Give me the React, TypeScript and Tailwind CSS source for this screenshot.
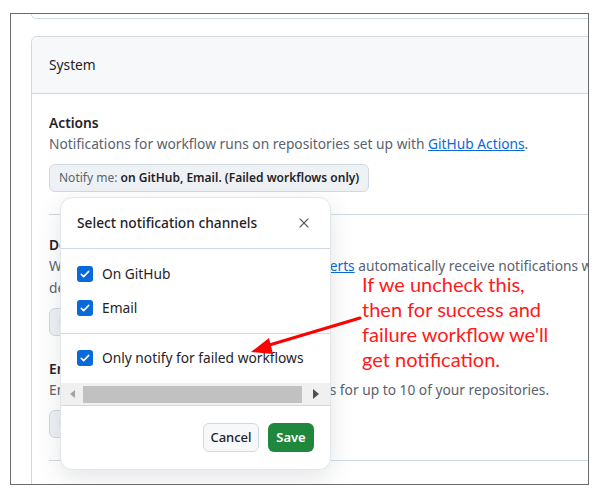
import { X } from "lucide-react";

const font = { fontFamily: '"Noto Sans", "Liberation Sans", sans-serif' };

const CheckBox = () => (
  <span className="flex h-4 w-4 items-center justify-center rounded-[3px] bg-[#0969da]">
    <svg width="12" height="12" viewBox="0 0 16 16" fill="none">
      <path
        d="M3 8.5l3.2 3L13 4.5"
        stroke="white"
        strokeWidth="2"
        strokeLinecap="round"
        strokeLinejoin="round"
      />
    </svg>
  </span>
);

const NotifyButton = ({ label }: { label: string }) => (
  <div className="mt-[9px] flex h-[28px] w-fit items-center rounded-md border border-[#d1d9e0] bg-[#eff2f5] px-[9px] text-[12px]">
    <span className="text-[#59636e]">Notify me:&nbsp;</span>
    <span className="font-semibold text-[#1f2328]">{label}</span>
  </div>
);

export default function App() {
  return (
    <div
      className="h-[498px] w-[607px] overflow-hidden bg-white pl-[10px] pt-[13px]"
      style={font}
    >
      {/* SCREENSHOT FRAME */}
      <div className="relative h-[472px] w-[579px] overflow-hidden border border-[#6b6b6b] bg-white text-[13.75px] text-[#1f2328]">
        {/* previous card, cut off */}
        <div className="ml-[20px] h-[5px] w-[700px] rounded-b-md border-x border-b border-[#d1d9e0]" />

        {/* SYSTEM CARD */}
        <div className="ml-[20px] mt-[17px] w-[900px] rounded-md border border-[#d1d9e0]">
          <div className="flex h-[57px] items-center rounded-t-md border-b border-[#d1d9e0] bg-[#f6f8fa] px-[17px]">
            System
          </div>

          <div className="px-[17px] pt-[18px]">
            {/* ACTIONS */}
            <div className="font-semibold leading-[21px]">Actions</div>
            <p className="leading-[22px] text-[#59636e]">
              Notifications for workflow runs on repositories set up with{" "}
              <span className="text-[#0969da] underline">GitHub Actions</span>.
            </p>
            <NotifyButton label="on GitHub, Email. (Failed workflows only)" />

            <div className="mt-[22px] h-px bg-[#d1d9e0]" />

            {/* DEPENDABOT */}
            <div className="pt-[19px] font-semibold leading-[21px]">
              Dependabot alerts
            </div>
            <p className="leading-[22px] text-[#59636e]">
              When you're given access to{" "}
              <span className="text-[#0969da] underline">Dependabot alerts</span>{" "}
              automatically receive notifications when a new vulnerability is
              found in one of your
              <br />
              dependencies.
            </p>
            <NotifyButton label="on GitHub, Email" />

            {/* EMAIL DIGEST */}
            <div className="mt-[22px] font-semibold leading-[21px]">
              Email weekly digest
            </div>
            <p className="leading-[22px] text-[#59636e]">
              Email a weekly summary summarizing alerts for up to 10 of your
              repositories.
            </p>
            <NotifyButton label="Email" />

            <div className="mt-[22px] h-px bg-[#d1d9e0]" />
            <div className="h-[40px]" />
          </div>
        </div>

        {/* POPUP */}
        <div className="absolute left-[49px] top-[183px] flex h-[273px] w-[271px] flex-col overflow-hidden rounded-xl border border-[#e1e6eb] bg-white shadow-[0_8px_24px_rgba(66,74,83,0.14)]">
          <div className="flex h-[51px] shrink-0 items-center justify-between border-b border-[#d1d9e0] pl-[16px] pr-[18px]">
            <span className="font-medium text-[#1f2328]">
              Select notification channels
            </span>
            <X size={16} strokeWidth={1.6} className="text-[#59636e]" />
          </div>

          <div className="border-b border-[#d1d9e0] py-2 pl-[16px]">
            <div className="flex h-[34px] items-center gap-[9px]">
              <CheckBox />
              <span>On GitHub</span>
            </div>
            <div className="flex h-[34px] items-center gap-[9px]">
              <CheckBox />
              <span>Email</span>
            </div>
          </div>

          <div className="pb-[8px] pl-[16px] pt-[7px]">
            <div className="flex h-[34px] items-center gap-[9px]">
              <CheckBox />
              <span>Only notify for failed workflows</span>
            </div>
          </div>

          {/* horizontal scrollbar */}
          <div className="flex h-[22px] shrink-0 items-center bg-[#f0f0f0]">
            <div className="flex w-[22px] justify-center">
              <span className="h-0 w-0 border-y-[4px] border-r-[5px] border-y-transparent border-r-[#a3a3a3]" />
            </div>
            <div className="h-[17px] w-[219px] bg-[#c1c1c1]" />
            <div className="flex flex-1 justify-center">
              <span className="h-0 w-0 border-y-[5px] border-l-[6px] border-y-transparent border-l-[#505050]" />
            </div>
          </div>

          <div className="flex flex-1 items-start justify-end gap-[9px] border-t border-[#d1d9e0] pr-[16px] pt-[17px]">
            <button className="h-[29px] w-[56px] rounded-md border border-[#d1d9e0] bg-[#f6f8fa] text-[13px] font-medium text-[#1f2328]">
              Cancel
            </button>
            <button className="h-[29px] w-[46px] rounded-md bg-[#1f883d] text-[13px] font-semibold text-white">
              Save
            </button>
          </div>
        </div>

        {/* ANNOTATION */}
        <svg
          className="absolute left-[220px] top-[295px]"
          width="150"
          height="70"
          viewBox="0 0 150 70"
        >
          <line
            x1="129"
            y1="9"
            x2="35"
            y2="37"
            stroke="#ff0000"
            strokeWidth="3"
            strokeLinecap="round"
          />
          <polygon points="20,43 38,29 42,45" fill="#ff0000" />
        </svg>
        <div
          className="absolute left-[351px] top-[258px] text-[20px] leading-[25px] text-[#ff1a1a]"
          style={{ fontFamily: "Lato, sans-serif" }}
        >
          If we uncheck this,
          <br />
          then for success and
          <br />
          failure workflow we'll
          <br />
          get notification.
        </div>
      </div>
    </div>
  );
}
